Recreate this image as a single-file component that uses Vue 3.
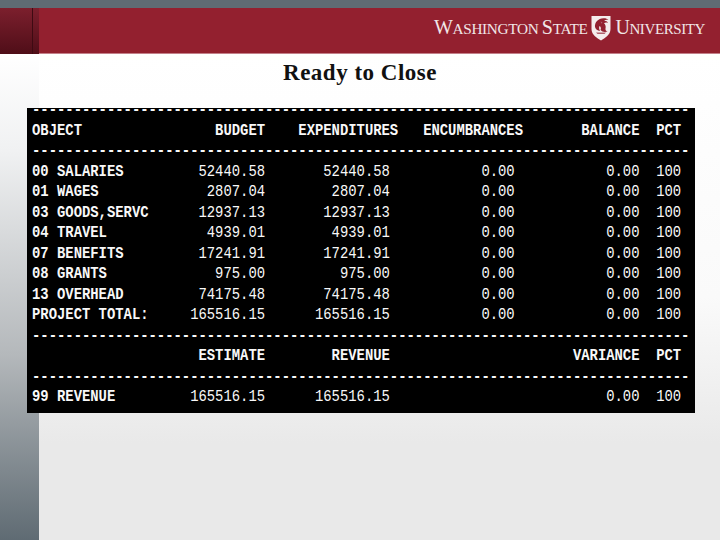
<script setup>
const dash = '-'.repeat(79)
const pad = (s, n) => String(s).padStart(n, ' ')

const header = 'OBJECT'.padEnd(22) + 'BUDGET' + '    ' + 'EXPENDITURES' + '   ' + 'ENCUMBRANCES' + '       ' + 'BALANCE' + '  ' + 'PCT'
const header2 = ' '.repeat(20) + 'ESTIMATE' + pad('REVENUE', 15) + ' '.repeat(22) + 'VARIANCE' + '  ' + 'PCT'

const row = (label, a, b, c, d, e) => ({
  label: label,
  rest: pad(a, 28 - label.length) + pad(b, 15) + pad(c, 15) + pad(d, 15) + '  ' + e,
})

const lines = [
  { bold: dash },
  { bold: header },
  { bold: dash },
  row('00 SALARIES', '52440.58', '52440.58', '0.00', '0.00', '100'),
  row('01 WAGES', '2807.04', '2807.04', '0.00', '0.00', '100'),
  row('03 GOODS,SERVC', '12937.13', '12937.13', '0.00', '0.00', '100'),
  row('04 TRAVEL', '4939.01', '4939.01', '0.00', '0.00', '100'),
  row('07 BENEFITS', '17241.91', '17241.91', '0.00', '0.00', '100'),
  row('08 GRANTS', '975.00', '975.00', '0.00', '0.00', '100'),
  row('13 OVERHEAD', '74175.48', '74175.48', '0.00', '0.00', '100'),
  row('PROJECT TOTAL:', '165516.15', '165516.15', '0.00', '0.00', '100'),
  { bold: dash },
  { bold: header2 },
  { bold: dash },
  row('99 REVENUE', '165516.15', '165516.15', '', '0.00', '100'),
]
</script>

<template>
  <div class="page">
    <div class="topbar"></div>
    <header class="header">
      <div class="corner"><div class="corner-line"></div></div>
      <div class="logo">
        <span class="word"><span class="big">W</span>ASHINGTON <span class="big">S</span>TATE</span>
        <svg class="shield" viewBox="0 0 20 26" width="20" height="26">
          <path d="M0.5 1 L19.5 1 L19.5 14 C19.5 20 14 23 10 25.5 C6 23 0.5 20 0.5 14 Z" fill="#f4ecec" />
          <path d="M4 12 C3.5 7.5 7 3.5 12.5 3.2 C14.5 3.1 16.5 3.8 17.5 4.8 C15.5 4.6 14.2 5 13.2 5.8 C15 5.8 16.5 6.6 17 8 C15.5 7.3 14 7.4 13 8.2 C14.5 9.5 15 11.5 14.5 13.5 C14.2 15 15 16 16.5 16.5 C14 17.5 11 17 9.5 15 C10.5 13 9.5 11.5 8.5 11 C7.8 12.5 8 14 9 16 C6.5 15.5 4.5 14.5 4 12 Z" fill="#93202f" />
          <path d="M9.5 6.5 L11.5 7.2 L10.5 8.8 Z M5 17.5 L15 17.5 L13.5 19 L6.5 19 Z" fill="#b0606c" />
        </svg>
        <span class="word word-tight"><span class="big">U</span>NIVERSITY</span>
      </div>
    </header>
    <div class="body">
      <aside class="side"></aside>
      <main class="main">
        <h1 class="title">Ready to Close</h1>
        <div class="terminal">
          <div class="screen">
            <div v-for="(l, i) in lines" :key="i" class="line"><template v-if="l.bold"><b>{{ l.bold }}</b></template><template v-else><b>{{ l.label }}</b>{{ l.rest }}</template></div>
          </div>
        </div>
      </main>
    </div>
  </div>
</template>

<style scoped>
.page {
  width: 720px;
  height: 540px;
  display: flex;
  flex-direction: column;
  overflow: hidden;
}
.topbar {
  height: 8px;
  background: #5f6b73;
}
.header {
  height: 45px;
  display: flex;
  background: #93202f;
  border-bottom: 1px solid #c3808a;
  box-sizing: content-box;
}
.corner {
  width: 39px;
  height: 46px;
  flex: none;
  background: linear-gradient(180deg, #7c1f2d 0%, #4f0e18 100%);
}
.corner-line {
  width: 1px;
  height: 46px;
  margin-left: 32px;
  background: #3e0a12;
}
.logo {
  margin-left: auto;
  padding: 6px 15px 0 0;
  display: flex;
  align-items: flex-start;
  gap: 4px;
  color: #f1e6e7;
  font-family: "Liberation Serif", serif;
}
.word {
  font-size: 15.3px;
  line-height: 26px;
  letter-spacing: -0.35px;
  white-space: pre;
}
.word-tight {
  font-size: 15px;
  letter-spacing: -0.4px;
}
.big {
  font-size: 20px;
}
.shield {
  margin-top: 1px;
  flex: none;
}
.body {
  flex: 1;
  min-height: 0;
  display: flex;
}
.side {
  width: 39px;
  flex: none;
  background: linear-gradient(180deg, #ffffff 0%, #f0f1f2 20%, #b4b8bb 62%, #5f6b73 100%);
}
.main {
  flex: 1;
  min-width: 0;
  background: linear-gradient(180deg, #ffffff 0%, #fafafa 50%, #e9e9e9 80%, #e9e9e9 100%);
}
.title {
  margin: 6px 0 0 -39px;
  height: 25px;
  font-family: "Liberation Serif", serif;
  font-size: 23px;
  font-weight: bold;
  line-height: 25px;
  letter-spacing: 0.5px;
  text-align: center;
  color: #111;
}
.terminal {
  margin: 23px 25px 0 -12px;
  height: 305px;
  background: #000;
}
.screen {
  padding-left: 6px;
  position: relative;
  top: -8px;
  transform: scaleX(0.8404);
  transform-origin: left top;
  width: 790px;
  color: #f8f8f8;
  font-family: "Liberation Mono", monospace;
  font-size: 16.5px;
  line-height: 20.5px;
}
.line {
  height: 20.5px;
  white-space: pre;
}
</style>
